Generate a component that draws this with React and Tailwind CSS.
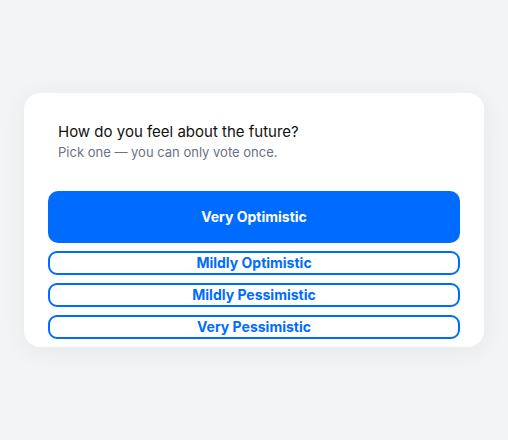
const OPTIONS = ['Very Optimistic', 'Mildly Optimistic', 'Mildly Pessimistic', 'Very Pessimistic'];

export default function App() {
  const selected = 0;

  return (
    <div className="min-h-screen bg-[#f3f4f6] flex items-center justify-center font-['Inter',sans-serif]">
      <div className="w-[460px] bg-white rounded-2xl shadow-[0_4px_24px_rgba(0,0,0,0.06)] pt-[29px] px-6 pb-2">
        {/* Header */}
        <div className="px-[10px]">
          <h1 className="text-[15px] leading-5 text-[#111111]">How do you feel about the future?</h1>
          <p className="mt-0.5 text-[13px] leading-4 text-[#6b7280]">Pick one — you can only vote once.</p>
        </div>

        {/* Options */}
        <div className="mt-[31px] flex flex-col gap-2">
          {OPTIONS.map((opt, i) =>
            i === selected ? (
              <button key={opt} className="h-[52px] w-full rounded-[10px] bg-[#006cff] text-white text-sm font-bold">
                {opt}
              </button>
            ) : (
              <button key={opt} className="h-6 w-full rounded-[9px] border-2 border-[#006cff] bg-white text-[#006cff] text-sm font-bold leading-none">
                {opt}
              </button>
            )
          )}
        </div>
      </div>
    </div>
  );
}
